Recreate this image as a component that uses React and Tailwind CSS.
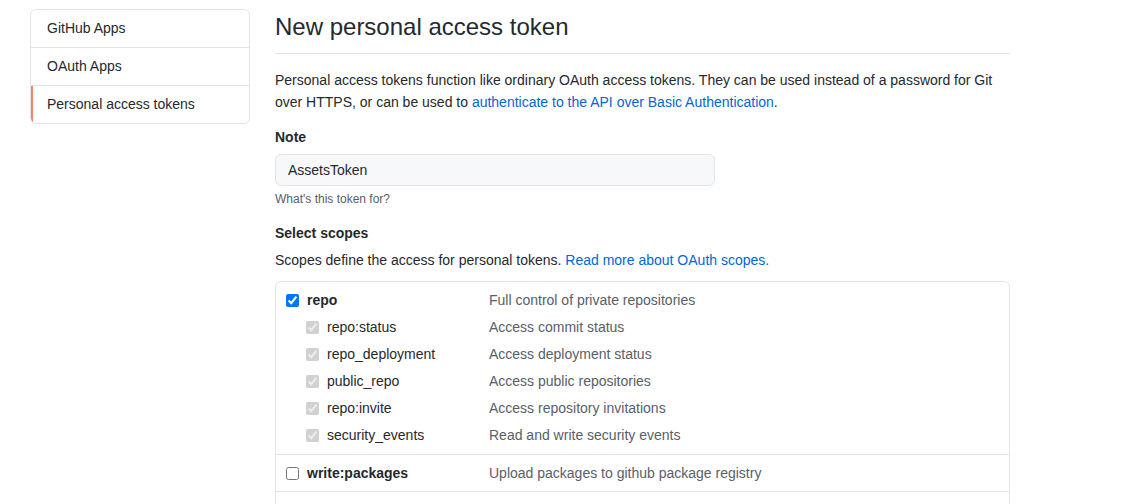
import React from "react";

const subScopes = [
  ["repo:status", "Access commit status"],
  ["repo_deployment", "Access deployment status"],
  ["public_repo", "Access public repositories"],
  ["repo:invite", "Access repository invitations"],
  ["security_events", "Read and write security events"],
];

export default function App() {
  return (
    <div
      className="min-h-screen bg-white text-[#24292e] text-[14px]"
      style={{ fontFamily: '"Liberation Sans", Arial, sans-serif' }}
    >
      <div className="flex pl-[30px] pt-[9px] gap-[25px]">
        {/* Sidebar */}
        <nav className="w-[220px] shrink-0 self-start border border-[#e1e4e8] rounded-[6px] overflow-hidden">
          <div className="h-[38px] flex items-center pl-[16px] border-b border-[#e1e4e8] leading-[21px]">
            GitHub Apps
          </div>
          <div className="h-[38px] flex items-center pl-[16px] border-b border-[#e1e4e8] leading-[21px]">
            OAuth Apps
          </div>
          <div className="h-[37px] flex items-center pl-[14px] border-l-2 border-[#f9826c] leading-[21px]">
            Personal access tokens
          </div>
        </nav>

        {/* Main */}
        <main className="w-[735px] shrink-0">
          <div className="border-b border-[#e1e4e8] pb-[8px]">
            <h1 className="text-[24px] leading-[36px] font-normal">New personal access token</h1>
          </div>

          <p className="mt-[15px] leading-[22px]">
            Personal access tokens function like ordinary OAuth access tokens. They can be used instead of a password for Git
            over HTTPS, or can be used to{" "}
            <a className="text-[#0366d6]">authenticate to the API over Basic Authentication</a>.
          </p>

          <div className="mt-[14px]">
            <div className="font-bold leading-[21px]">Note</div>
            <div className="mt-[6px] w-[440px] h-[32px] border border-[#e1e4e8] bg-[#f6f8fa] rounded-[6px] flex items-center pl-[12px]">
              AssetsToken
            </div>
            <div className="mt-[4px] text-[12px] leading-[18px] text-[#586069]">What's this token for?</div>
          </div>

          <div className="mt-[15px]">
            <div className="font-bold leading-[21px]">Select scopes</div>
            <div className="mt-[5px] leading-[22px]">
              Scopes define the access for personal tokens.{" "}
              <a className="text-[#0366d6]">Read more about OAuth scopes.</a>
            </div>
          </div>

          <div className="mt-[10px] border border-[#e1e4e8] rounded-[6px]">
            {/* repo group */}
            <div className="pt-[4px] pb-[5px] border-b border-[#e1e4e8]">
              <div className="h-[28px] flex items-center pl-[10px]">
                <div className="w-[203px] flex items-center">
                  <input type="checkbox" defaultChecked className="m-0 mr-[8px] w-[13px] h-[13px]" />
                  <span className="font-bold text-[#24292e]">repo</span>
                </div>
                <span className="text-[#586069]">Full control of private repositories</span>
              </div>
              {subScopes.map(([name, desc]) => (
                <div key={name} className="h-[27px] flex items-center pl-[30px]">
                  <div className="w-[183px] flex items-center">
                    <input type="checkbox" checked disabled readOnly className="m-0 mr-[8px] w-[13px] h-[13px]" />
                    <span>{name}</span>
                  </div>
                  <span className="text-[#586069]">{desc}</span>
                </div>
              ))}
            </div>

            {/* write:packages */}
            <div className="h-[37px] flex items-center pl-[10px] border-b border-[#e1e4e8]">
              <div className="w-[203px] flex items-center">
                <input type="checkbox" className="m-0 mr-[8px] w-[13px] h-[13px]" />
                <span className="font-bold">write:packages</span>
              </div>
              <span className="text-[#586069]">Upload packages to github package registry</span>
            </div>

            {/* read:packages */}
            <div className="h-[37px] flex items-center pl-[10px] border-b border-[#e1e4e8]">
              <div className="w-[203px] flex items-center">
                <input type="checkbox" className="m-0 mr-[8px] w-[13px] h-[13px]" />
                <span className="font-bold">read:packages</span>
              </div>
              <span className="text-[#586069]">Download packages from github package registry</span>
            </div>
          </div>
        </main>
      </div>
    </div>
  );
}
